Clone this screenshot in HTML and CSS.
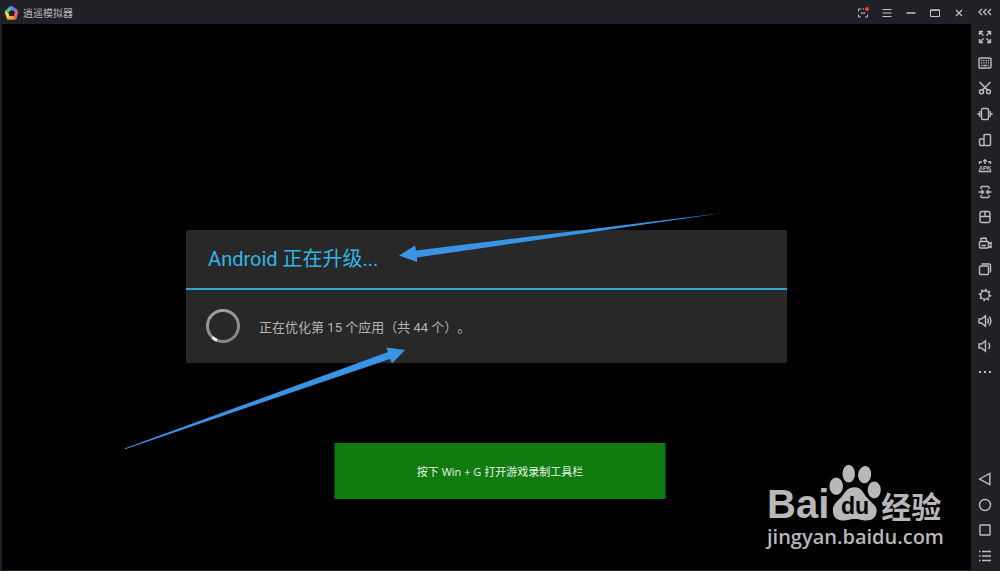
FILE: index.html
```html
<!DOCTYPE html>
<html lang="zh-CN">
<head>
    <meta charset="UTF-8">
    <meta name="viewport" content="width=device-width, initial-scale=1.0">
    <title>逍遥模拟器</title>
    <link rel="stylesheet" href="styles.css">
</head>
<body>
    <div class="window">
        <!-- Title bar -->
        <header class="titlebar">
            <svg class="logo" viewBox="0 0 16 16">
                <path d="M8 0 4.5 2.4 6.2 6 11 5.6z" fill="#4b8df8"/>
                <path d="M8 0.2 14.6 4.6 12.4 8.6 10.4 5.4z" fill="#8a6cf0"/>
                <path d="M15.4 5.5 13.4 14 9.6 11.4 11.4 7z" fill="#ef5a5a"/>
                <path d="M13.2 15 3.8 15.2 5 10.8 10 11.2z" fill="#f9a13a"/>
                <path d="M3.4 15 0.6 6.4 5 6.2 6 11z" fill="#f3dc4a"/>
                <path d="M0.5 6 6 1.6 7.4 5 4.8 8z" fill="#52cf6a"/>
                <path d="M8 4.8 11.4 7.2 10.2 11.2H5.8L4.6 7.2z" fill="#202026"/>
            </svg>
            <h1 class="app-name">逍遥模拟器</h1>
            <div class="window-controls">
                <button aria-label="小窗">
                    <svg viewBox="0 0 12 12"><path d="M1.500 4.500V2H4M1.500 7.500V10H4M10.500 7.500V10H8M5.500 2H7M3.500 6h5"/><circle class="dot" cx="10" cy="2" r="2"/></svg>
                </button>
                <button aria-label="菜单">
                    <svg viewBox="0 0 12 12"><path d="M1.500 2.500h9M1.500 6h9M1.500 9.500h9"/></svg>
                </button>
                <button aria-label="最小化">
                    <svg viewBox="0 0 12 12"><path d="M1.500 6h9" stroke-width="1.500"/></svg>
                </button>
                <button aria-label="最大化">
                    <svg viewBox="0 0 12 12"><path d="M1.500 2.800h9v6.700h-9zM1.500 3.400h9"/></svg>
                </button>
                <button aria-label="关闭">
                    <svg viewBox="0 0 12 12"><path d="M3 3l6 6M9 3L3 9" stroke-width="1.200"/></svg>
                </button>
            </div>
        </header>

        <!-- Emulator screen -->
        <main class="screen">
            <section class="dialog">
                <h2 class="dialog-title">Android 正在升级...</h2>
                <div class="dialog-body">
                    <svg class="spinner" viewBox="0 0 36 36">
                        <defs>
                            <linearGradient id="ring" x1="0" y1="0" x2="0.4" y2="1">
                                <stop offset="0" stop-color="#a4a4a4"/>
                                <stop offset="1" stop-color="#858585"/>
                            </linearGradient>
                        </defs>
                        <circle cx="18" cy="18" r="15.500" stroke="url(#ring)"/>
                        <path d="M7.400 29.300A15.500 15.500 0 0 0 12 32.300" stroke="#fff"/>
                    </svg>
                    <p>正在优化第 15 个应用<span class="paren" lang="zh-TW">（</span>共 44 个<span class="paren" lang="zh-TW">）</span>。</p>
                </div>
            </section>
        </main>

        <!-- Side toolbar -->
        <aside class="sidebar">
            <button class="collapse" aria-label="收起">
                <svg viewBox="0 0 16 16"><path d="M5 5 2 8l3 3M9.500 5l-3 3 3 3M14 5l-3 3 3 3"/></svg>
            </button>
            <div class="tools">
                <button aria-label="全屏">
                    <svg viewBox="0 0 16 16"><path d="M2.500 6V2.500H6M2.500 2.500l4 4M10 2.500h3.500V6M13.500 2.500l-4 4M2.500 10v3.500H6M2.500 13.500l4-4M10 13.500h3.500V10M13.500 13.500l-4-4"/></svg>
                </button>
                <button aria-label="键盘">
                    <svg viewBox="0 0 16 16"><rect x="2" y="3" width="12" height="10" rx="1"/><path d="M4 5.500h8M4 7.800h8" stroke-width="1.300" stroke-dasharray="1.200 1.060"/><path d="M4 10.500h1.200M6.200 10.500h3.600M10.800 10.500H12"/></svg>
                </button>
                <button aria-label="截图">
                    <svg viewBox="0 0 16 16"><path d="M2.500 2 11 10.500M13.500 2 5 10.500" stroke-width="1.600"/><circle cx="4.500" cy="11.800" r="2"/><circle cx="11.500" cy="11.800" r="2"/></svg>
                </button>
                <button aria-label="摇一摇">
                    <svg viewBox="0 0 16 16"><rect x="4.500" y="2.500" width="7" height="11" rx="1.500"/><path d="M2.800 5v6M13.200 5v6M1.200 7v2M14.800 7v2"/></svg>
                </button>
                <button aria-label="旋转屏幕">
                    <svg viewBox="0 0 16 16"><rect x="7" y="2.500" width="6.500" height="11" rx="1"/><path d="M7 7H3.500q-1 0-1 1v4.500q0 1 1 1H7"/></svg>
                </button>
                <button aria-label="安装APK">
                    <svg viewBox="0 0 16 16"><path d="M2.500 6V4H5M11 4h2.500V6M8 1.500V6M6.200 3.500 8 1.800l1.800 1.700M2.500 12v1.500h11V12"/><text x="8" y="11.500">APK</text></svg>
                </button>
                <button aria-label="共享文件">
                    <svg viewBox="0 0 16 16"><path d="M4 5V3.500q0-1 1-1h6q1 0 1 1V5M4 11v1.500q0 1 1 1h6q1 0 1-1V11M1.500 8h5M14.500 8h-5M4.500 6l2 2-2 2M11.500 6l-2 2 2 2"/></svg>
                </button>
                <button aria-label="鼠标">
                    <svg viewBox="0 0 16 16"><rect x="3" y="2.500" width="10" height="11" rx="2"/><path d="M3 7.500h10M8 2.500v5"/></svg>
                </button>
                <button aria-label="录像">
                    <svg viewBox="0 0 16 16"><path d="M3.500 6.500h7q1 0 1 1V12q0 1-1 1h-7q-1 0-1-1V7.500q0-1 1-1zM4 6.500v-3l5-.5.500 3.500M4.500 10.500h4.500M11.500 8.500l2.500-1v5l-2.500-1"/></svg>
                </button>
                <button aria-label="多开">
                    <svg viewBox="0 0 16 16"><rect x="2.500" y="5" width="9" height="8.500" rx="1"/><path d="M4.500 3H12q1.500 0 1.500 1.500v7"/></svg>
                </button>
                <button aria-label="设置">
                    <svg viewBox="0 0 16 16"><circle cx="8" cy="8" r="4.300"/><circle class="cog" cx="8" cy="8" r="5.600" pathLength="80"/></svg>
                </button>
                <button aria-label="音量加">
                    <svg viewBox="0 0 16 16"><path d="M2 6h2.500L8.500 2.800v10.400L4.500 10H2zM10.500 5.500q1.800 2.500 0 5M12.300 3.500q3.200 4.500 0 9"/></svg>
                </button>
                <button aria-label="音量减">
                    <svg viewBox="0 0 16 16"><path d="M2 6h2.500L8.500 2.800v10.400L4.500 10H2zM11.500 5q2.400 3 0 6"/></svg>
                </button>
                <button aria-label="更多">
                    <svg viewBox="0 0 16 16"><path d="M2 8h2M7 8h2M12 8h2" stroke-width="1.800"/></svg>
                </button>
            </div>
            <nav class="nav-keys">
                <button aria-label="返回">
                    <svg viewBox="0 0 16 16"><path d="M2.500 8 12.800 2.500v11z"/></svg>
                </button>
                <button aria-label="主页">
                    <svg viewBox="0 0 16 16"><circle cx="8" cy="8" r="5.500"/></svg>
                </button>
                <button aria-label="任务">
                    <svg viewBox="0 0 16 16"><rect x="3" y="3" width="10" height="10" rx="0.500"/></svg>
                </button>
                <button aria-label="列表">
                    <svg viewBox="0 0 16 16"><path d="M2 3.500h1.500M5 3.500h9M2 8h1.500M5 8h9M2 12.500h1.500M5 12.500h9"/></svg>
                </button>
            </nav>
        </aside>

        <div class="toast">按下 Win + G 打开游戏录制工具栏</div>

        <svg class="arrows" viewBox="0 0 1000 571">
            <path d="M723 213 416 250.500 415 245.500 399 255.500 417 262 417 257.500z"/>
            <path d="M125 448.200 388 352 386 347.500 405 350 392 363.500 390 359 125 449.200z"/>
        </svg>

        <!-- Watermark -->
        <div class="watermark">
            <div class="brand">
                <span class="brand-bai">Bai</span>
                <svg class="paw" viewBox="0 0 54 60">
                    <ellipse cx="7.500" cy="24" rx="7" ry="9"/>
                    <ellipse cx="20.500" cy="11" rx="6.500" ry="9.200"/>
                    <ellipse cx="37" cy="12" rx="6.800" ry="9" transform="rotate(8 37 12)"/>
                    <ellipse cx="47" cy="28" rx="6.800" ry="8.800"/>
                    <path d="M26.500 25C34 25 36 32 39.500 36C43.500 41 50 44 49.500 50C48.500 58 43 60 37 59.500C32 59 31 58 26.500 58C22 58 20 59.500 14 59.500C7 59.500 4 55 4 49C4 42 10 39 14 34C17 29 20 25 26.500 25z"/>
                    <text x="27" y="53">du</text>
                </svg>
                <span class="brand-cn">经验</span>
            </div>
            <div class="site">jingyan.baidu.com</div>
        </div>
    </div>
</body>
</html>
```
FILE: styles.css
```css
* {
    box-sizing: border-box;
}
body {
    margin: 0;
    background: #000;
    font-family: "Open Sans", "Noto Sans CJK SC", sans-serif;
}
h1, h2, p {
    margin: 0;
    font-weight: normal;
}
.window {
    position: relative;
    display: grid;
    grid-template-columns: 1fr 29px;
    grid-template-rows: 24px 1fr;
    min-height: 100vh;
    background: #202026;
    overflow: hidden;
}

/* Title bar */
.titlebar {
    display: flex;
    align-items: center;
    padding: 1px 0 0 4px;
}
.logo {
    width: 15px;
    height: 16px;
}
.app-name {
    margin-left: 4px;
    font-size: 10px;
    line-height: 16px;
    color: #b9b9bd;
}
.window-controls {
    display: flex;
    margin-left: auto;
}
button {
    display: flex;
    align-items: center;
    justify-content: center;
    padding: 0;
    border: none;
    background: none;
    cursor: pointer;
}
button svg {
    width: 16px;
    height: 16px;
    fill: none;
    stroke: #bcbcc0;
    stroke-width: 1.4;
}
.window-controls button {
    width: 24px;
    height: 24px;
}
.window-controls svg {
    width: 12px;
    height: 12px;
    stroke: #c4c4c8;
    stroke-width: 1;
}
.window-controls .dot {
    fill: #f04040;
    stroke: none;
}

/* Screen */
.screen {
    grid-row: 2;
    display: flex;
    align-items: center;
    justify-content: center;
    margin: 0 0 1px 2px;
    padding-bottom: 2px;
    background: #000;
}
.dialog {
    width: 62%;
    background: #282828;
    border-radius: 2px;
}
.dialog-title {
    padding: 0 22px;
    font-family: Roboto, "Noto Sans CJK SC", sans-serif;
    font-size: 20px;
    line-height: 58px;
    color: #33b5e5;
    border-bottom: 2px solid #2fa5d0;
}
.dialog-body {
    display: flex;
    align-items: center;
    gap: 18px;
    height: 73px;
    padding: 0 19px;
    font-family: Roboto, "Noto Sans CJK SC", sans-serif;
    font-size: 13px;
    color: #b4b4b4;
    text-spacing-trim: space-all;
}
.dialog-body .paren {
    font-family: "Noto Sans CJK TC", sans-serif;
}
.spinner {
    width: 36px;
    height: 36px;
    fill: none;
    stroke-width: 3;
}

/* Side toolbar */
.sidebar {
    grid-column: 2;
    grid-row: 1 / 3;
    display: flex;
    flex-direction: column;
    padding: 0 2px 2px 0;
}
.sidebar button {
    width: 100%;
}
.collapse {
    height: 24px;
}
.tools {
    display: grid;
    grid-auto-rows: 1fr;
    height: 361px;
}
.tools text {
    font-family: "Liberation Sans", sans-serif;
    font-size: 6px;
    font-weight: bold;
    text-anchor: middle;
    fill: #bcbcc0;
    stroke: none;
}
.tools .cog {
    stroke-width: 1.5;
    stroke-dasharray: 4 6;
}
.nav-keys {
    display: grid;
    grid-auto-rows: 1fr;
    height: 103px;
    margin-top: auto;
}

/* Overlays */
.toast {
    position: absolute;
    left: 50%;
    bottom: 72px;
    width: 331px;
    padding-top: 1px;
    transform: translateX(-50%);
    background: #107c10;
    color: #e8f3e8;
    font-size: 11px;
    line-height: 55px;
    text-align: center;
}
.arrows {
    position: absolute;
    left: 0;
    top: 0;
    width: 100%;
    height: 100%;
    fill: #3a94e6;
    pointer-events: none;
}
.watermark {
    position: absolute;
    right: 54px;
    bottom: 20px;
    width: 179px;
    color: #b8b8b8;
}
.brand {
    display: flex;
    align-items: flex-end;
    height: 58px;
}
.brand-bai {
    font-family: "Liberation Sans", sans-serif;
    font-size: 40px;
    font-weight: bold;
    line-height: 34px;
}
.paw {
    flex: none;
    width: 52px;
    height: 58px;
    fill: #b8b8b8;
}
.paw text {
    font-family: "Liberation Sans", sans-serif;
    font-size: 24px;
    font-weight: bold;
    text-anchor: middle;
    fill: #000;
}
.brand-cn {
    font-family: "Noto Sans CJK SC", sans-serif;
    font-size: 30px;
    font-weight: bold;
    line-height: 32px;
    white-space: nowrap;
}
.site {
    padding-top: 2px;
    font-size: 20px;
    font-weight: 600;
    line-height: 28px;
}
```
